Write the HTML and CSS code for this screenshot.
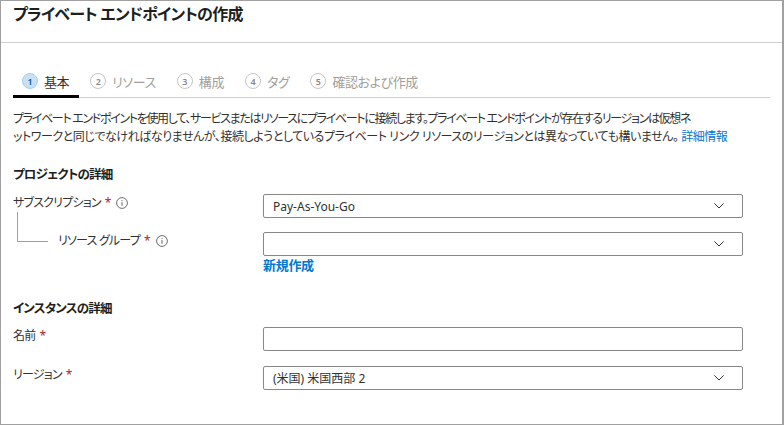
FILE: index.html
```html
<!DOCTYPE html>
<html lang="ja">
<head>
<meta charset="utf-8">
<link rel="stylesheet" href="styles.css">
</head>
<body>
<div class="frame">
  <header class="page-header">
    <h1 class="title">プライベート エンドポイントの作成</h1>
  </header>
  <nav class="tabs">
    <div class="tab active"><span class="num">1</span><span class="tab-label">基本</span></div>
    <div class="tab"><span class="num">2</span><span class="tab-label">リソース</span></div>
    <div class="tab"><span class="num">3</span><span class="tab-label">構成</span></div>
    <div class="tab"><span class="num">4</span><span class="tab-label">タグ</span></div>
    <div class="tab"><span class="num">5</span><span class="tab-label">確認および作成</span></div>
  </nav>
  <p class="desc"><span class="desc-l1">プライベート エンドポイントを使用して、サービスまたはリソースにプライベートに接続します。プライベート エンドポイントが存在するリージョンは仮想ネ</span><br>ットワークと同じでなければなりませんが、接続しようとしているプライベート リンク リソースのリージョンとは異なっていても構いません。 <a class="link" href="#">詳細情報</a></p>

  <h2 class="section">プロジェクトの詳細</h2>
  <div class="row">
    <div class="label">サブスクリプション <span class="req">*</span>
      <svg class="info" width="12" height="12" viewBox="0 0 12 12"><circle cx="6" cy="6" r="5.4" fill="none" stroke="#605e5c" stroke-width="0.9"/><path d="M6 5.2v3.6" stroke="#605e5c" stroke-width="1"/><circle cx="6" cy="3.6" r="0.6" fill="#605e5c"/></svg>
    </div>
    <div class="control select"><span class="value">Pay-As-You-Go</span>
      <svg class="chev" width="10" height="6" viewBox="0 0 10 6"><path d="M0.4 0.4L5 5L9.6 0.4" fill="none" stroke="#323130" stroke-width="1"/></svg>
    </div>
  </div>
  <div class="row row-sub">
    <div class="label"><span class="tree"></span>リソース グループ <span class="req">*</span>
      <svg class="info" width="12" height="12" viewBox="0 0 12 12"><circle cx="6" cy="6" r="5.4" fill="none" stroke="#605e5c" stroke-width="0.9"/><path d="M6 5.2v3.6" stroke="#605e5c" stroke-width="1"/><circle cx="6" cy="3.6" r="0.6" fill="#605e5c"/></svg>
    </div>
    <div class="control-col">
      <div class="control select"><span class="value"></span>
        <svg class="chev" width="10" height="6" viewBox="0 0 10 6"><path d="M0.4 0.4L5 5L9.6 0.4" fill="none" stroke="#323130" stroke-width="1"/></svg>
      </div>
      <a class="link new" href="#">新規作成</a>
    </div>
  </div>

  <h2 class="section section-2">インスタンスの詳細</h2>
  <div class="row row-first">
    <div class="label">名前 <span class="req">*</span></div>
    <div class="control"></div>
  </div>
  <div class="row">
    <div class="label">リージョン <span class="req">*</span></div>
    <div class="control select"><span class="value">(米国) 米国西部 2</span>
      <svg class="chev" width="10" height="6" viewBox="0 0 10 6"><path d="M0.4 0.4L5 5L9.6 0.4" fill="none" stroke="#323130" stroke-width="1"/></svg>
    </div>
  </div>
</div>
</body>
</html>
```
FILE: styles.css
```css
* { box-sizing: border-box; }
html, body { margin: 0; padding: 0; background: #fff; }
body {
  font-family: "Noto Sans", "Noto Sans CJK JP", sans-serif;
  font-feature-settings: "palt";
  color: #323130;
  font-size: 12px;
}
.frame {
  width: 784px;
  height: 425px;
  border: 1px solid #a0a0a0;
  border-right-width: 2px;
  overflow: hidden;
}
.page-header {
  height: 42px;
  border-bottom: 1px solid #d0d0d0;
  padding: 2px 12px 0;
}
.title {
  margin: 0;
  font-size: 16px;
  letter-spacing: -0.75px;
  font-weight: 600;
  line-height: 22px;
  color: #201f1e;
}
.tabs {
  display: flex;
  gap: 2px;
  margin: 28px 12px 0;
  border-bottom: 1px solid #d0d0d0;
  height: 27px;
}
.tab {
  display: flex;
  align-items: center;
  gap: 6px;
  padding: 0 10px 6px 9px;
  color: #a19f9d;
  font-size: 13px;
  letter-spacing: -0.4px;
}
.tab.active {
  color: #323130;
  border-bottom: 3px solid #000;
  margin-bottom: -1px;
  padding-bottom: 4px;
}
.num {
  width: 16px;
  height: 16px;
  border-radius: 50%;
  border: 1px solid #c8c6c4;
  display: flex;
  align-items: center;
  justify-content: center;
  font-size: 9px;
  font-weight: 600;
  color: #8a8886;
  letter-spacing: 0;
}
.active .num {
  background: #c7e0f4;
  border-color: #a9cdee;
  color: #005a9e;
}
.desc {
  margin: 12px 12px 0;
  line-height: 18px;
  font-size: 12px;
  letter-spacing: -0.45px;
  white-space: nowrap;
}
.desc-l1 { letter-spacing: -1.32px; }
.link { color: #0078d4; text-decoration: none; }
.section {
  margin: 20px 12px 0;
  font-size: 12.5px;
  letter-spacing: -0.8px;
  font-weight: 600;
  line-height: 18px;
  color: #201f1e;
}
.section-2 { margin-top: 26px; }
.row {
  display: flex;
  align-items: flex-start;
  margin: 10px 0 0 12px;
}
.row + .row { margin-top: 15px; }
.row.row-sub { margin-top: 14px; }
.row.row-first { margin-top: 9px; }
.label {
  width: 250px;
  display: flex;
  align-items: center;
  line-height: 18px;
  font-size: 12px;
  letter-spacing: -0.8px;
}
.req { color: #a4262c; margin-left: 4px; font-size: 12px; letter-spacing: 0; }
.info { margin-left: 5px; }
.tree {
  width: 31px;
  height: 30px;
  border-left: 1px solid #a0a0a0;
  border-bottom: 1px solid #a0a0a0;
  margin: -20px 10px 0 4px;
  align-self: flex-start;
  flex: none;
}
.control-col { display: flex; flex-direction: column; }
.control {
  width: 480px;
  height: 24px;
  border: 1px solid #8a8886;
  border-radius: 2px;
  display: flex;
  align-items: center;
  padding: 0 18px 0 9px;
}
.select { justify-content: space-between; }
.value { font-size: 12px; letter-spacing: 0; }
.new { font-weight: 600; font-size: 13px; margin-top: 0; line-height: 18px; letter-spacing: -0.3px; }
```
